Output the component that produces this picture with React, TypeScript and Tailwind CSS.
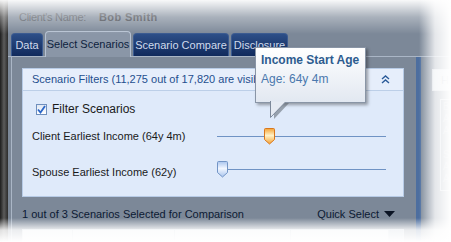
import React from 'react';

const font = { fontFamily: '"Liberation Sans", Arial, sans-serif' };

const Thumb = ({ tone }: { tone: 'orange' | 'blue' }) => {
  const id = `g-${tone}`;
  const top = tone === 'orange' ? '#fff2c8' : '#f2f7ff';
  const bottom = tone === 'orange' ? '#f5a233' : '#a9c5ee';
  const stroke = tone === 'orange' ? '#d9771c' : '#7395c6';
  return (
    <svg width="11" height="17" viewBox="0 0 11 17" className="block">
      <defs>
        <linearGradient id={id} x1="0" y1="0" x2="0" y2="1">
          <stop offset="0" stopColor={bottom} />
          <stop offset="0.45" stopColor={top} />
          <stop offset="1" stopColor={bottom} />
        </linearGradient>
      </defs>
      <path d="M0.5 1.5 Q0.5 0.5 1.5 0.5 H9.5 Q10.5 0.5 10.5 1.5 V11.5 L5.5 16 L0.5 11.5 Z" fill={`url(#${id})`} stroke={stroke} />
    </svg>
  );
};

const Slider = ({ pos, tone }: { pos: number; tone: 'orange' | 'blue' }) => (
  <div className="relative w-[169px] h-[17px]">
    <div className="absolute left-0 right-0 top-[8px] h-px bg-[#6f93c4]" />
    <div className="absolute top-0" style={{ left: pos }}>
      <Thumb tone={tone} />
    </div>
  </div>
);

const tabDark =
  'h-[23px] flex items-center justify-center rounded-t-[4px] border border-b-0 border-[#3a5a90] bg-gradient-to-b from-[#2d4f88] to-[#112a5c] text-[#cfdaec]';

export default function App() {
  return (
    <div className="relative w-[451px] h-[242px] overflow-hidden bg-[#7c8898] flex text-[11px] leading-[13px]" style={font}>
      {/* left dark edge */}
      <div className="w-[8px] shrink-0 bg-gradient-to-r from-[#1e1e1e] via-[#5c5c5c] to-[#2c2c2c]" />

      <div className="flex-1 min-h-0 flex flex-col">
        <div className="h-[32px] shrink-0 flex items-center pl-[11px] gap-[13px] pt-[2px]">
          <span className="text-[#4a4f57] tracking-[-0.3px]">Client's Name:</span>
          <span className="font-bold text-[#3c4048] tracking-[0.4px]">Bob Smith</span>
        </div>

        {/* tabs */}
        <div className="h-[25px] shrink-0 flex items-end gap-[2px] pl-[3px] border-b border-[#aab6c6]">
          <div className={`${tabDark} w-[32px]`}>Data</div>
          <div className="h-[26px] w-[86px] flex items-center justify-center rounded-t-[4px] border border-b-0 border-[#b6c2d2] bg-[#8a96a7] text-[#0e1f3e] -mb-px">Select Scenarios</div>
          <div className={`${tabDark} w-[96px]`}>Scenario Compare</div>
          <div className={`${tabDark} w-[57px]`}>Disclosure</div>
        </div>

        <div className="flex-1 min-h-0 overflow-hidden flex">
          <div className="w-[404px] shrink-0 ml-[3px] border-l border-[#aab6c6] flex flex-col pt-[11px] pl-[10px]">
            {/* filter panel */}
            <div className="w-[382px] h-[129px] shrink-0 bg-[#dfeafa] border border-[#b7cbe6] flex flex-col text-[#1a1a1a]">
              <div className="h-[22px] shrink-0 flex items-center justify-between pl-[9px] pr-[13px] bg-[#e6eefb] border-b border-[#bccfe8] text-[#1f4f8e]">
                <span>Scenario Filters (11,275 out of 17,820 are visible)</span>
                <svg width="9" height="9" viewBox="0 0 9 9">
                  <path d="M1 4 L4.5 1 L8 4 M1 8 L4.5 5 L8 8" fill="none" stroke="#2b5b99" strokeWidth="1.4" />
                </svg>
              </div>
              <div className="h-[13px] shrink-0 flex items-center gap-[5px] pl-[13px] mt-[12px]">
                <div className="w-[11px] h-[11px] border border-[#6f8fbd] bg-gradient-to-b from-[#dfe7f3] to-white flex items-center justify-center">
                  <svg width="9" height="9" viewBox="0 0 9 9">
                    <path d="M1 4.5 L3.5 7.5 L8 1" fill="none" stroke="#2a66c8" strokeWidth="1.8" />
                  </svg>
                </div>
                <span className="text-[12px] leading-[13px]">Filter Scenarios</span>
              </div>
              <div className="h-[17px] shrink-0 flex items-center justify-between pl-[9px] pr-[17px] mt-[12px]">
                <span>Client Earliest Income (64y 4m)</span>
                <Slider pos={47} tone="orange" />
              </div>
              <div className="h-[17px] shrink-0 flex items-start justify-between pl-[9px] pr-[17px] mt-[16px]">
                <span className="mt-[5px]">Spouse Earliest Income (62y)</span>
                <Slider pos={0} tone="blue" />
              </div>
            </div>

            <div className="w-[382px] h-[13px] shrink-0 flex items-center justify-between mt-[11px] pr-[9px] text-[#0c1a33]">
              <span>1 out of 3 Scenarios Selected for Comparison</span>
              <span className="flex items-center gap-[5px]">
                Quick Select
                <svg width="11" height="7" viewBox="0 0 11 7"><path d="M0 0 H11 L5.5 6 Z" fill="#0b1424" /></svg>
              </span>
            </div>

            <div className="w-[382px] h-[16px] shrink-0 mt-[8px] flex border border-[#c6ced8] bg-[#e6eaef]">
              <div className="w-[50px] border-r border-[#c6ced8]" />
              <div className="w-[102px] border-r border-[#c6ced8]" />
              <div className="w-[116px] border-r border-[#c6ced8]" />
              <div className="flex-1 border-r border-[#c6ced8]" />
              <div className="w-[14px] bg-[#b8c4d4]" />
            </div>
          </div>

          {/* splitter */}
          <div className="w-[5px] shrink-0 ml-[1px] bg-[#4d6e9f]" />

          {/* right panel (faded) */}
          <div className="flex-1 pl-[11px] pt-[12px]">
            <div className="h-[22px] border border-[#c4ccd6] bg-[#d8dee6] pl-[8px] text-[#9aa4b0] flex items-center">H</div>
            <div className="ml-[8px] mt-[8px] h-[92px] border border-[#c4ccd6] pl-[2px] pt-[1px] text-[#a8b0bb] text-[10px] leading-[12px]">
              <div>Bo</div><div>A</div><div>A</div><div className="mt-[12px]">Sp</div><div>A</div><div>A</div>
            </div>
          </div>
        </div>
      </div>

      {/* tooltip */}
      <div className="absolute left-[255px] top-[47px] w-[111px] h-[56px] border border-[#8995a6] bg-gradient-to-b from-white to-[#e2e8f1] shadow-[2px_2px_3px_rgba(0,0,0,0.35)] pl-[5px] pt-[5px]">
        <div className="font-bold text-[12px] text-[#2d5c8f] leading-[15px]">Income Start Age</div>
        <div className="text-[12px] text-[#4a78ad] mt-[5px]">Age: 64y 4m</div>
      </div>
      <svg className="absolute left-[268px] top-[101px]" width="22" height="19" viewBox="0 0 22 19">
        <path d="M4 1 L4 17 L19 1 Z" fill="#505860" opacity="0.5" transform="translate(2,1)" />
        <path d="M2.5 0 L2.5 16.5 L17.5 1" fill="#e6ebf3" stroke="#7d899a" />
        <path d="M3 0 H17" stroke="#e3e9f2" strokeWidth="2" />
      </svg>

      {/* vignette */}
      <div className="absolute left-0 right-0 top-0 h-[34px] bg-gradient-to-b from-[rgba(255,255,255,0.95)] via-[rgba(255,255,255,0.35)] to-transparent pointer-events-none" />
      <div className="absolute left-0 right-0 bottom-0 h-[24px] bg-gradient-to-t from-white via-[rgba(255,255,255,0.85)] to-transparent pointer-events-none" />
      <div className="absolute top-0 bottom-0 right-0 w-[32px] bg-gradient-to-l from-white via-[rgba(255,255,255,0.8)] to-transparent pointer-events-none" />
    </div>
  );
}
